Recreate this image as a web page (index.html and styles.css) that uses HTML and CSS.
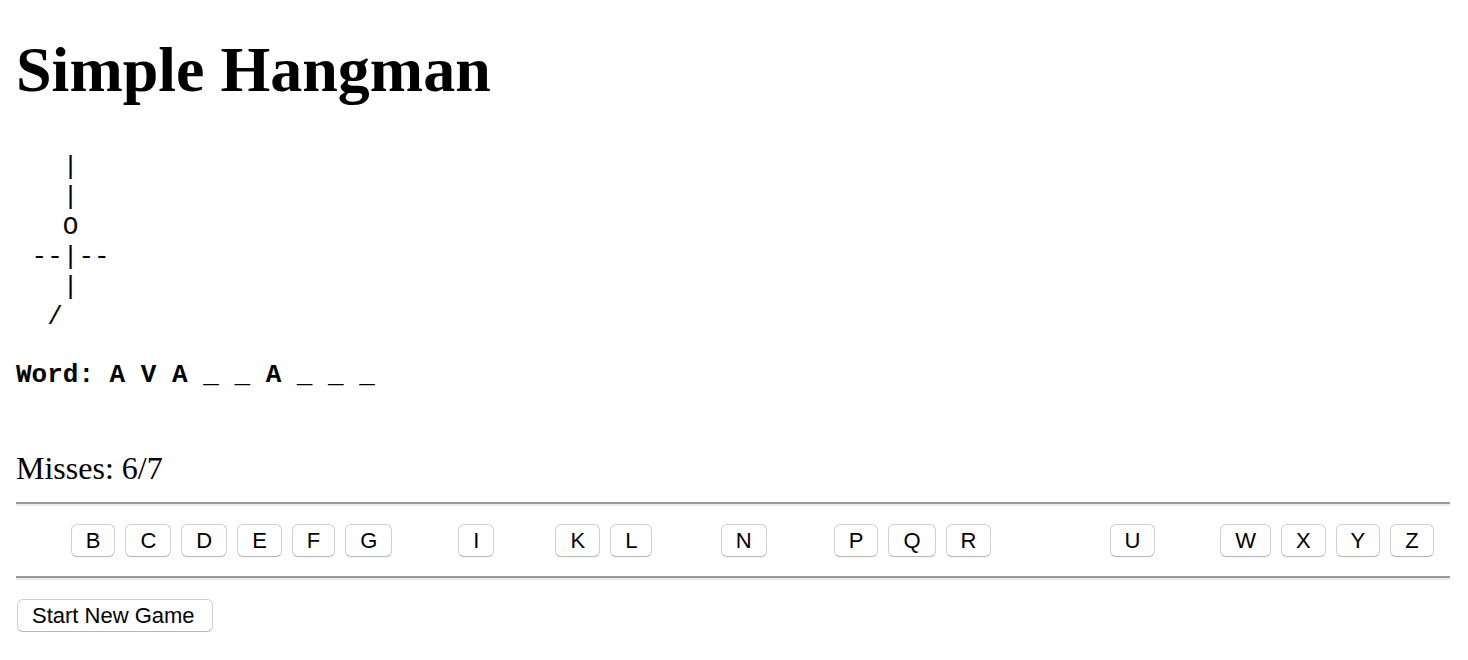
FILE: index.html
```html
<!DOCTYPE html>
<html lang="en">
<head>
<meta charset="utf-8">
<title>Simple Hangman</title>
<link rel="stylesheet" href="styles.css">
</head>
<body>
<h1 class="title">Simple Hangman</h1>
<pre class="gallows">   |
   |
   O
 --|--
   |
  /</pre>
<div class="word">Word: A V A _ _ A _ _ _</div>
<div class="misses">Misses: 6/7</div>
<hr class="rule">
<div class="letters">
  <button class="key used">A</button>
  <button class="key">B</button>
  <button class="key">C</button>
  <button class="key">D</button>
  <button class="key">E</button>
  <button class="key">F</button>
  <button class="key">G</button>
  <button class="key used">H</button>
  <button class="key">I</button>
  <button class="key used">J</button>
  <button class="key">K</button>
  <button class="key">L</button>
  <button class="key used">M</button>
  <button class="key">N</button>
  <button class="key used">O</button>
  <button class="key">P</button>
  <button class="key">Q</button>
  <button class="key">R</button>
  <button class="key used">S</button>
  <button class="key used">T</button>
  <button class="key">U</button>
  <button class="key used">V</button>
  <button class="key">W</button>
  <button class="key">X</button>
  <button class="key">Y</button>
  <button class="key">Z</button>
</div>
<hr class="rule rule-bottom">
<button class="key new-game">Start New Game</button>
</body>
</html>
```
FILE: styles.css
```css
html, body {
  background: #ffffff;
}
body {
  margin: 0;
  padding: 0 18px 0 16px;
  font-family: "Liberation Serif", "Times New Roman", serif;
  color: #000;
}
.title {
  margin: 34px 0 0;
  font-size: 64px;
  line-height: 72px;
  font-weight: bold;
}
.gallows {
  margin: 46px 0 0;
  font-family: "Liberation Mono", "Courier New", monospace;
  font-size: 26px;
  line-height: 30px;
}
.word {
  margin-top: 28px;
  font-family: "Liberation Mono", "Courier New", monospace;
  font-size: 26px;
  line-height: 30px;
  font-weight: bold;
  white-space: pre;
}
.misses {
  margin-top: 60px;
  font-size: 32px;
  line-height: 37px;
}
.rule {
  margin: 15px 0 0;
  height: 0;
  border: 0;
  border-top: 2px solid #9a9a9a;
  border-bottom: 2px solid #ececec;
}
.rule-bottom {
  margin-top: 19px;
}
.letters {
  margin-top: 18px;
  display: flex;
  flex-wrap: nowrap;
  gap: 10px;
}
.key {
  margin: 0;
  padding: 3px 14px;
  font-family: "Liberation Sans", Arial, sans-serif;
  font-size: 22px;
  line-height: 25px;
  color: #000;
  background: #ffffff;
  border: 1px solid #d0d0d0;
  border-bottom-color: #b9b9b9;
  border-radius: 6px;
  box-shadow: 0 1px 0 rgba(0, 0, 0, 0.04);
  flex: none;
}
.used {
  visibility: hidden;
}
.new-game {
  margin-top: 19px;
  display: block;
  margin-left: 1px;
  padding: 3px 17px 3px 14px;
}
```
